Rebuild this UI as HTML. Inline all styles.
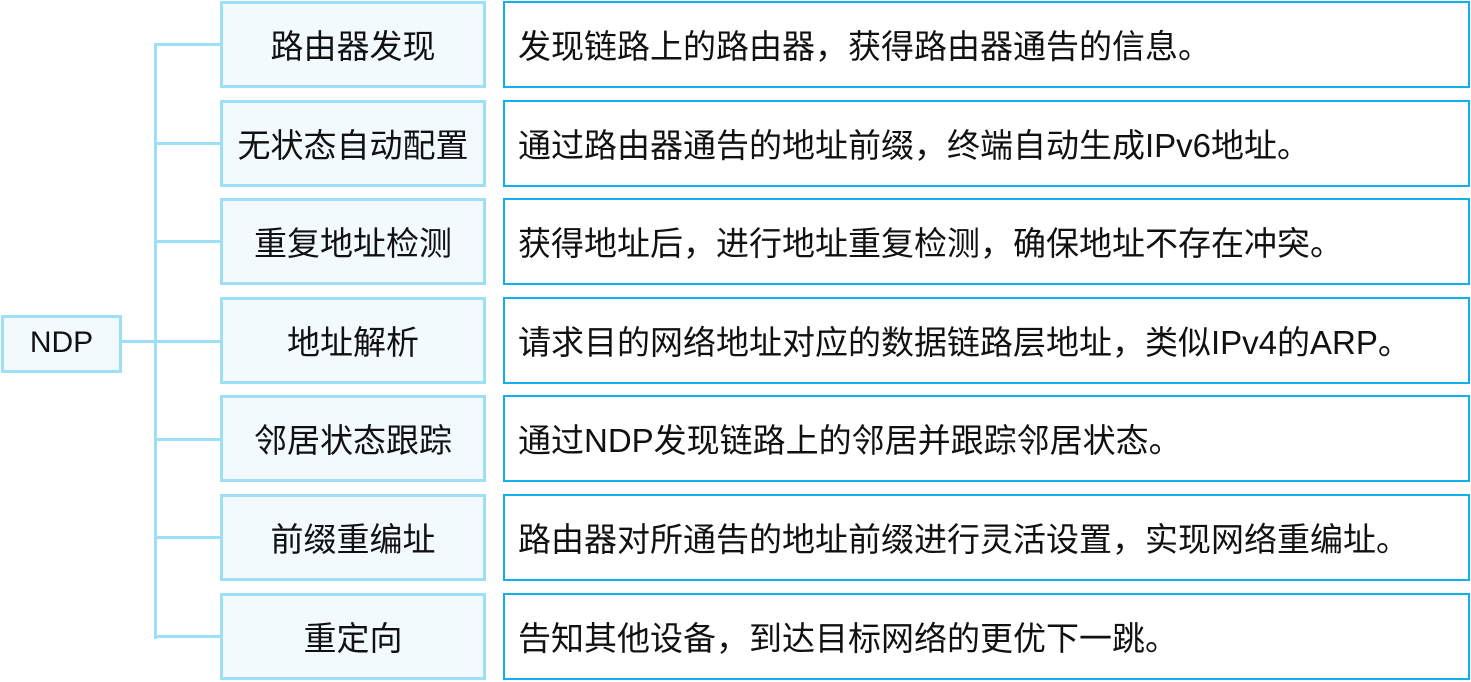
<!DOCTYPE html>
<html><head><meta charset="utf-8"><style>
body{margin:0;width:1471px;height:682px;background:#fff;position:relative;overflow:hidden;font-family:"Liberation Sans","Noto Sans CJK SC",sans-serif;color:#111}
.b{position:absolute;box-sizing:border-box}
.l{left:220px;width:266px;height:87px;border:3px solid #9ddff6;background:#f2fafd;display:flex;align-items:center;justify-content:center;font-size:33px;padding-bottom:2px}
.r{left:503px;width:967px;height:87px;border:2px solid #0fb0ec;background:#fff;display:flex;align-items:center;padding-left:13px;font-size:33px;padding-bottom:2px}
.h{position:absolute;height:3px;background:#9ddff6}
</style></head><body>
<div class="b" style="left:1px;top:315px;width:121px;height:58px;border:3px solid #9ddff6;background:#f2fafd;display:flex;align-items:center;justify-content:center;font-size:30px;padding-bottom:2px">NDP</div>
<div class="h" style="left:121px;top:340px;width:100px"></div>
<div class="b" style="left:154px;top:43px;width:3px;height:596px;background:#9ddff6"></div>
<div class="h" style="left:154px;top:43px;width:67px"></div>
<div class="h" style="left:154px;top:142px;width:67px"></div>
<div class="h" style="left:154px;top:240px;width:67px"></div>
<div class="h" style="left:154px;top:438px;width:67px"></div>
<div class="h" style="left:154px;top:536px;width:67px"></div>
<div class="h" style="left:154px;top:635px;width:67px"></div>

<div class="b l" style="top:1px">路由器发现</div>
<div class="b r" style="top:1px">发现链路上的路由器，获得路由器通告的信息。</div>
<div class="b l" style="top:100px">无状态自动配置</div>
<div class="b r" style="top:100px">通过路由器通告的地址前缀，终端自动生成IPv6地址。</div>
<div class="b l" style="top:198px">重复地址检测</div>
<div class="b r" style="top:198px">获得地址后，进行地址重复检测，确保地址不存在冲突。</div>
<div class="b l" style="top:297px">地址解析</div>
<div class="b r" style="top:297px">请求目的网络地址对应的数据链路层地址，类似IPv4的ARP。</div>
<div class="b l" style="top:395px">邻居状态跟踪</div>
<div class="b r" style="top:395px">通过NDP发现链路上的邻居并跟踪邻居状态。</div>
<div class="b l" style="top:494px">前缀重编址</div>
<div class="b r" style="top:494px">路由器对所通告的地址前缀进行灵活设置，实现网络重编址。</div>
<div class="b l" style="top:593px">重定向</div>
<div class="b r" style="top:593px">告知其他设备，到达目标网络的更优下一跳。</div>
</body></html>
